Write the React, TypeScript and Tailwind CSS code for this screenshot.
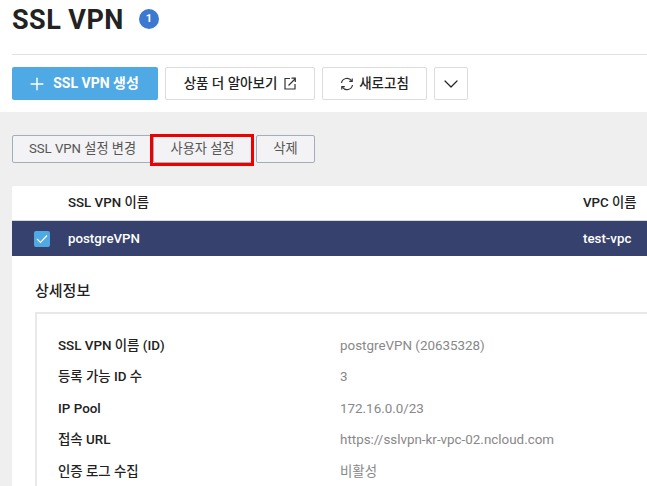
import { ChevronDown, Plus } from "lucide-react";

const details = [
  { label: "SSL VPN 이름 (ID)", value: "postgreVPN (20635328)" },
  { label: "등록 가능 ID 수", value: "3" },
  { label: "IP Pool", value: "172.16.0.0/23" },
  { label: "접속 URL", value: "https://sslvpn-kr-vpc-02.ncloud.com" },
  { label: "인증 로그 수집", value: "비활성" },
];

const App = () => {
  return (
    <div className="w-[647px] h-[486px] overflow-hidden bg-white font-['Roboto','Noto_Sans_CJK_KR',sans-serif] text-[#222]">
      {/* title */}
      <div className="h-[55px] ml-3 border-b border-[#e2e2e2] flex items-start pt-[5px]">
        <h1 className="text-[27px] leading-[30px] font-bold tracking-[0.45px]">SSL VPN</h1>
        <span className="ml-[15px] mt-[4px] w-[20px] h-[20px] rounded-full bg-[#3c78d0] text-white text-[11px] font-bold flex items-center justify-center">1</span>
      </div>

      {/* toolbar */}
      <div className="h-[57px] pl-3 pt-3 flex items-start text-[13.5px] font-medium">
        <button className="w-[146px] h-[33px] pr-[4px] rounded-[2px] bg-[#4fa9e4] text-white text-[14px] font-bold flex items-center justify-center gap-[6px]">
          <Plus size={20} strokeWidth={1.75} />
          SSL VPN 생성
        </button>
        <button className="ml-[7px] w-[150px] h-[33px] rounded-[2px] bg-white border border-[#dcdcdc] flex items-center justify-center gap-[7px]">
          상품 더 알아보기
          <svg width="12" height="13" viewBox="0 0 12 13" fill="none" stroke="#333" strokeWidth="1.2">
            <path d="M6 1.5H1v10.5h10V7" />
            <path d="M4.5 8.5L11 2M7.5 1.2h3.8V5" />
          </svg>
        </button>
        <button className="ml-[7px] w-[105px] h-[33px] rounded-[2px] bg-white border border-[#dcdcdc] flex items-center justify-center gap-[5px]">
          <svg width="14" height="14" viewBox="0 0 14 14" fill="none" stroke="#333" strokeWidth="1.2">
            <path d="M1.5 6A5.6 5.6 0 0 1 11.6 3.8" />
            <path d="M12.5 8A5.6 5.6 0 0 1 2.4 10.2" />
            <path d="M12.2 1.4v3h-3M1.8 12.6v-3h3" />
          </svg>
          새로고침
        </button>
        <button className="ml-[7px] w-[34px] h-[33px] rounded-[2px] bg-white border border-[#dcdcdc] flex items-center justify-center">
          <ChevronDown size={24} strokeWidth={1.2} />
        </button>
      </div>

      {/* content */}
      <div className="h-[374px] bg-[#efefef] pl-3 pt-[23px]">
        <div className="flex items-start text-[13.2px] text-[#555]">
          <button className="w-[141px] h-[28px] bg-[#f3f3f5] border border-[#a3aebd] rounded-[2px] flex items-center justify-center">SSL VPN 설정 변경</button>
          <button className="relative w-[99px] h-[28px] bg-[#f3f3f5] border border-[#a3aebd] rounded-[2px] flex items-center justify-center">
            사용자 설정
            <span className="absolute -left-[4px] -top-[2px] w-[104px] h-[32px] border-[3px] border-[#ee0000]"></span>
          </button>
          <button className="ml-[4px] w-[59px] h-[28px] bg-[#f3f3f5] border border-[#a3aebd] rounded-[2px] flex items-center justify-center">삭제</button>
        </div>

        <div className="mt-[23px] bg-white h-[300px] rounded-tl-[2px] overflow-hidden">
          <div className="h-[35px] pl-[56px] flex items-center text-[13.3px] font-medium border-b border-[#d9d9d9]">
            <span className="w-[515px]">SSL VPN 이름</span>
            <span>VPC 이름</span>
          </div>
          <div className="h-[35px] pl-[22px] flex items-center bg-[#36416d] text-white text-[13.3px] font-medium">
            <span className="w-[16px] h-[16px] rounded-[2px] bg-[#4fa9e4] flex items-center justify-center">
              <svg width="12" height="10" viewBox="0 0 12 10" fill="none" stroke="white" strokeWidth="1.2">
                <path d="M1 5l3.5 3.5L11 1.5" />
              </svg>
            </span>
            <span className="ml-[18px] w-[515px]">postgreVPN</span>
            <span>test-vpc</span>
          </div>

          <div className="pl-[23px] pt-[24px]">
            <h2 className="text-[15px] leading-[22px] font-medium">상세정보</h2>
            <div className="mt-[10px] border-2 border-r-0 border-[#e8e8e8] pl-[21px] pt-[16px]">
              {details.map((row) => (
                <div key={row.label} className="h-[31.5px] flex items-center text-[13.4px]">
                  <span className="w-[282px] font-medium">{row.label}</span>
                  <span className="text-[#888]">{row.value}</span>
                </div>
              ))}
            </div>
          </div>
        </div>
      </div>
    </div>
  );
};

export default App;
